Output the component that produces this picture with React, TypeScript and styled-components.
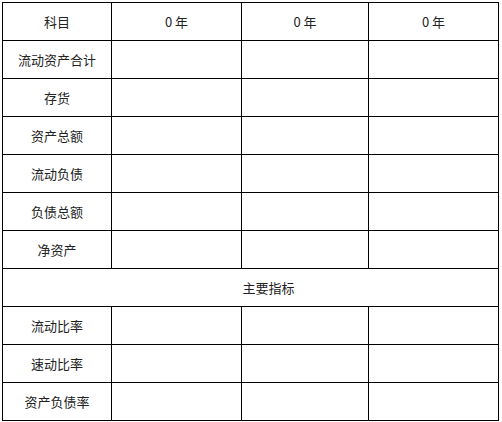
import styled, { createGlobalStyle } from 'styled-components';

const GlobalStyle = createGlobalStyle`
  html, body, #root {
    margin: 0;
    padding: 0;
    background: #fff;
  }
  body {
    font-family: "Noto Sans CJK SC", "Noto Sans", sans-serif;
  }
`;

const Wrapper = styled.div`
  padding: 2px 0 0 2px;
`;

const Table = styled.table`
  width: 497px;
  height: 417px;
  border-collapse: collapse;
  table-layout: fixed;
  font-size: 13px;
  color: #222;
`;

const Cell = styled.td<{ $indent?: number }>`
  border: 1px solid #000;
  text-align: center;
  vertical-align: middle;
  padding: 0 0 0 ${(p) => p.$indent ?? 0}px;
  height: 37px;
  white-space: nowrap;
`;

const years = ['0 年', '0 年', '0 年'];
const topRows = ['流动资产合计', '存货', '资产总额', '流动负债', '负债总额', '净资产'];
const ratioRows = ['流动比率', '速动比率', '资产负债率'];

const Row = ({ label }: { label: string }) => (
  <tr>
    <Cell>{label}</Cell>
    <Cell />
    <Cell />
    <Cell />
  </tr>
);

export default function App() {
  return (
    <>
      <GlobalStyle />
      <Wrapper>
        <Table>
          <colgroup>
            <col style={{ width: 109 }} />
            <col style={{ width: 130 }} />
            <col style={{ width: 127 }} />
            <col style={{ width: 130 }} />
          </colgroup>
          <tbody>
            <tr>
              <Cell>科目</Cell>
              {years.map((y, i) => (
                <Cell key={i}>{y}</Cell>
              ))}
            </tr>
            {topRows.map((r) => (
              <Row key={r} label={r} />
            ))}
            <tr>
              <Cell colSpan={4} $indent={36}>主要指标</Cell>
            </tr>
            {ratioRows.map((r) => (
              <Row key={r} label={r} />
            ))}
          </tbody>
        </Table>
      </Wrapper>
    </>
  );
}
